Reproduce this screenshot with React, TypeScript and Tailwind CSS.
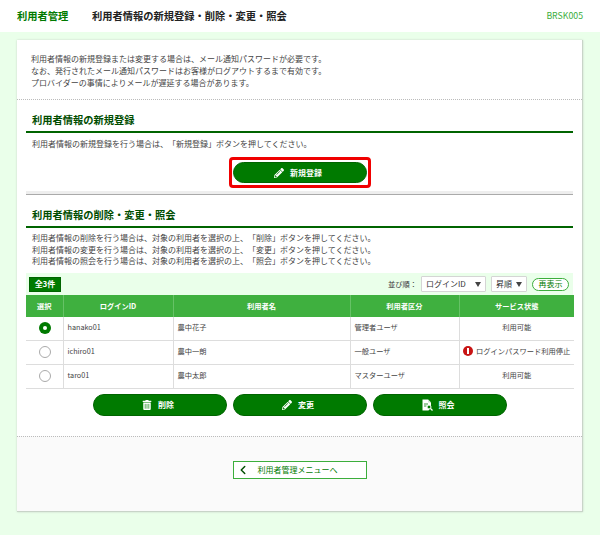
import { ChevronLeft } from "lucide-react";
import { FaPencilAlt, FaTrashAlt } from "react-icons/fa";
import type { ReactNode } from "react";

const rows = [
  { id: "hanako01", name: "農中花子", kind: "管理者ユーザ", status: "利用可能", checked: true },
  { id: "ichiro01", name: "農中一朗", kind: "一般ユーザ", status: "ログインパスワード利用停止", stopped: true },
  { id: "taro01", name: "農中太郎", kind: "マスターユーザ", status: "利用可能" },
];

function FileSearchIcon() {
  return (
    <svg width="11" height="12" viewBox="0 0 11 12" className="shrink-0">
      <path d="M0.5 0.5h5.500l3 3v4.500l-2.500 3.500h-6z" fill="#fff" />
      <path d="M6 0.500v3h3z" fill="#cfe6cf" />
      <path d="M2 5h4M2 7h2.500" stroke="#007a00" strokeWidth="0.8" />
      <circle cx="7" cy="8" r="2" fill="#007a00" stroke="#fff" strokeWidth="1" />
      <path d="M8.500 9.500l2 2" stroke="#fff" strokeWidth="1.300" />
    </svg>
  );
}

function PillButton({ icon, label, className = "h-[22px]" }: { icon: ReactNode; label: string; className?: string }) {
  return (
    <button className={`flex w-[134px] items-center justify-center gap-[6px] rounded-full border border-[#006400] bg-[#007a00] pr-[3px] text-[8px] font-bold text-white ${className}`}>
      {icon}
      {label}
    </button>
  );
}

function SectionTitle({ children }: { children: ReactNode }) {
  return (
    <h2 className="border-b-2 border-[#006400] px-[6px] pb-[4px] text-[10.250px] leading-[14px] font-bold text-[#004d00]">
      {children}
    </h2>
  );
}

function Select({ label, className }: { label: string; className: string }) {
  return (
    <div className={`flex h-[16px] items-center justify-between rounded-[1px] border border-[#d5d5d5] bg-white pr-[4px] pl-[4px] text-[8px] text-[#333] ${className}`}>
      {label}
      <svg width="6" height="5" viewBox="0 0 6 5" className="shrink-0">
        <path d="M0 0h6l-3 5z" fill="#444" />
      </svg>
    </div>
  );
}

export default function App() {
  return (
    <div
      className="flex h-[535px] w-[600px] flex-col overflow-hidden bg-[#eaffea] text-[#444] [text-spacing-trim:space-all]"
      style={{ fontFamily: '"Noto Sans CJK JP", "Noto Sans", sans-serif' }}
    >
      <header className="flex h-[32px] shrink-0 items-center bg-white pr-[17px] pl-[17px]">
        <div className="w-[75px] text-[10.250px] font-bold text-[#007a00]">利用者管理</div>
        <h1 className="text-[10.250px] font-bold text-[#222]">利用者情報の新規登録・削除・変更・照会</h1>
        <div className="ml-auto text-[8.750px] text-[#3cae3c]">BRSK005</div>
      </header>

      <main className="mx-[17px] mt-[8px] flex h-[472px] flex-col border-r border-b border-[#c8d4c8] bg-white shadow-[0_0_2px_#c8d4c8]">
        <div className="h-[60px] border-b border-dotted border-[#bbb] px-[14px] pt-[13px] text-[8px] leading-[12px]">
          <p>利用者情報の新規登録または変更する場合は、メール通知パスワードが必要です。</p>
          <p>なお、発行されたメール通知パスワードはお客様がログアウトするまで有効です。</p>
          <p>プロバイダーの事情によりメールが遅延する場合があります。</p>
        </div>

        <section className="mx-[9px] mt-[13px]">
          <SectionTitle>利用者情報の新規登録</SectionTitle>
          <p className="px-[6px] pt-[5px] text-[8px] leading-[12px]">
            利用者情報の新規登録を行う場合は、「新規登録」ボタンを押してください。
          </p>
          <div className="mt-[7px] flex justify-center">
            <div className="rounded-[4px] border-[3px] border-[#f00000] px-[1px] py-[2px]">
              <PillButton icon={<FaPencilAlt className="size-[10px]" />} label="新規登録" className="h-[21px]" />
            </div>
          </div>
          <div className="mt-[3px] h-[4px] border-b border-[#aaa] bg-[#eee]" />
        </section>

        <section className="mx-[9px] mt-[13px]">
          <SectionTitle>利用者情報の削除・変更・照会</SectionTitle>
          <div className="px-[6px] pt-[4px] text-[8px] leading-[11.500px]">
            <p>利用者情報の削除を行う場合は、対象の利用者を選択の上、「削除」ボタンを押してください。</p>
            <p>利用者情報の変更を行う場合は、対象の利用者を選択の上、「変更」ボタンを押してください。</p>
            <p>利用者情報の照会を行う場合は、対象の利用者を選択の上、「照会」ボタンを押してください。</p>
          </div>

          <div className="mt-[6.500px] flex h-[22px] items-center bg-[#eaffea] pr-[4px] pl-[3px]">
            <div className="flex h-[15px] w-[32px] items-center justify-center border border-[#006400] bg-[#007a00] text-[8px] font-bold text-white">
              全3件
            </div>
            <span className="mr-[4px] ml-auto text-[7.250px] text-[#333]">並び順：</span>
            <Select label="ログインID" className="w-[65px]" />
            <Select label="昇順" className="ml-[5px] w-[36px]" />
            <div className="ml-[5px] flex h-[13px] w-[37px] items-center justify-center rounded-full border border-[#3cae3c] bg-white text-[8px] text-[#007a00]">
              再表示
            </div>
          </div>

          <table className="w-[548px] table-fixed border-collapse text-[7.250px]">
            <thead>
              <tr className="h-[22px] bg-[#3fb03f] font-bold text-white">
                <th className="w-[37px] border-r border-[#66c266]">選択</th>
                <th className="w-[110px] border-r border-[#66c266]">ログインID</th>
                <th className="w-[177px] border-r border-[#66c266]">利用者名</th>
                <th className="w-[109px] border-r border-[#66c266]">利用者区分</th>
                <th className="w-[115px]">サービス状態</th>
              </tr>
            </thead>
            <tbody>
              {rows.map((row, i) => (
                <tr key={row.id} className={`border-b border-[#ddd] ${i === 0 ? "h-[23px]" : "h-[24px]"}`}>
                  <td className="border-r border-[#ddd] pl-[1px]">
                    {row.checked ? (
                      <span className="mx-auto flex size-[12px] items-center justify-center rounded-full bg-[#007a00]">
                        <span className="size-[4px] rounded-full bg-white" />
                      </span>
                    ) : (
                      <span className="mx-auto block size-[12px] rounded-full border border-[#aaa] bg-white" />
                    )}
                  </td>
                  <td className="border-r border-[#ddd] pb-[2px] pl-[4px]">{row.id}</td>
                  <td className="border-r border-[#ddd] pb-[2px] pl-[4px]">{row.name}</td>
                  <td className="border-r border-[#ddd] pb-[2px] pl-[4px]">{row.kind}</td>
                  <td className="pb-[2px] text-center">
                    {row.stopped ? (
                      <span className="flex items-center justify-center gap-[3px] whitespace-nowrap">
                        <span className="flex size-[10px] shrink-0 items-center justify-center rounded-full bg-[#c81414]">
                          <span className="h-[6px] w-[2px] bg-white" />
                        </span>
                        {row.status}
                      </span>
                    ) : (
                      row.status
                    )}
                  </td>
                </tr>
              ))}
            </tbody>
          </table>

          <div className="mt-[5px] flex justify-center gap-[6px]">
            <PillButton icon={<FaTrashAlt className="size-[10px]" />} label="削除" />
            <PillButton icon={<FaPencilAlt className="size-[10px]" />} label="変更" />
            <PillButton icon={<FileSearchIcon />} label="照会" />
          </div>
        </section>

        <div className="mt-[20px] flex flex-1 items-start justify-center border-t border-dotted border-[#bbb] bg-[#fafafa] pt-[24px]">
          <button className="relative flex h-[18px] w-[134px] items-center border border-[#3cae3c] bg-white pl-[24px] text-[8px] text-[#007a00]">
            <ChevronLeft className="absolute top-[1px] left-[2px] size-[14px] text-[#004d00]" strokeWidth={2.500} />
            利用者管理メニューへ
          </button>
        </div>
      </main>
    </div>
  );
}
